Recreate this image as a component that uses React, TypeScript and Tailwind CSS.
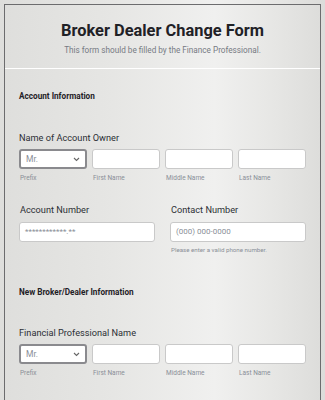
import React from "react";

const Input = ({ placeholder, value }: { placeholder?: string; value?: string }) => (
  <div className="h-[20px] bg-white border border-[#c9c9c9] rounded-[3px] flex items-center px-[5px] text-[8px] text-[#8a8f98]">
    {value ?? placeholder ?? ""}
  </div>
);

const Select = () => (
  <div className="h-[20px] bg-white border-2 border-[#8a8a8e] rounded-[3px] flex items-center justify-between pl-[5px] pr-[5px] text-[8.5px] text-[#8a8f98]">
    <span>Mr.</span>
    <svg width="7" height="5" viewBox="0 0 7 5" fill="none">
      <path d="M1 1l2.5 2.5L6 1" stroke="#666" strokeWidth="1.1" />
    </svg>
  </div>
);

const Sub = ({ children }: { children: React.ReactNode }) => (
  <div className="text-[6.5px] text-[#8a8f98] mt-[5px] pl-[1px] leading-[8px]">{children}</div>
);

const NameRow = () => (
  <div className="grid grid-cols-4 gap-x-[5px]">
    <Select />
    <Input />
    <Input />
    <Input />
    <Sub>Prefix</Sub>
    <Sub>First Name</Sub>
    <Sub>Middle Name</Sub>
    <Sub>Last Name</Sub>
  </div>
);

export default function App() {
  return (
    <div
      className="w-[325px] h-[400px] overflow-hidden pt-[4px] px-[4px] bg-[linear-gradient(90deg,#dededc_0%,#e6e6e4_35%,#f0f0ef_66%,#e6e6e4_85%,#dcdcda_100%)]"
      style={{ fontFamily: "Roboto, 'Liberation Sans', sans-serif" }}
    >
      <div className="border border-[#6c6c6e] border-b-0 h-[420px]">
        <div className="flex flex-col items-center pt-[16px] pb-[13px] border-b border-white">
          <div className="text-[16.4px] font-bold text-[#1f2126] leading-[20px]">Broker Dealer Change Form</div>
          <div className="text-[8.2px] text-[#767a83] mt-[4px] leading-[10px]">
            This form should be filled by the Finance Professional.
          </div>
        </div>
        <div className="px-[14px]">
          <div className="mt-[22px] text-[8.2px] font-bold text-[#1f2126] leading-[10px]">Account Information</div>
          <div className="mt-[31px] text-[9.2px] text-[#2c2f35] leading-[12px]">Name of Account Owner</div>
          <div className="mt-[5px]">
            <NameRow />
          </div>

          <div className="grid grid-cols-2 gap-x-[15px] mt-[22px]">
            <div>
              <div className="text-[9.2px] text-[#2c2f35] leading-[12px] pl-[1px]">Account Number</div>
              <div className="mt-[6px]">
                <Input value="************.**" />
              </div>
            </div>
            <div>
              <div className="text-[9.2px] text-[#2c2f35] leading-[12px] pl-[1px]">Contact Number</div>
              <div className="mt-[6px]">
                <Input placeholder="(000) 000-0000" />
              </div>
              <div className="text-[6.2px] text-[#8a8f98] mt-[4px] pl-[1px] leading-[8px]">Please enter a valid phone number.</div>
            </div>
          </div>

          <div className="mt-[33px] text-[8.2px] font-bold text-[#1f2126] leading-[10px]">New Broker/Dealer Information</div>
          <div className="mt-[30px] text-[9.2px] text-[#2c2f35] leading-[12px]">Financial Professional Name</div>
          <div className="mt-[5px]">
            <NameRow />
          </div>
        </div>
      </div>
    </div>
  );
}
